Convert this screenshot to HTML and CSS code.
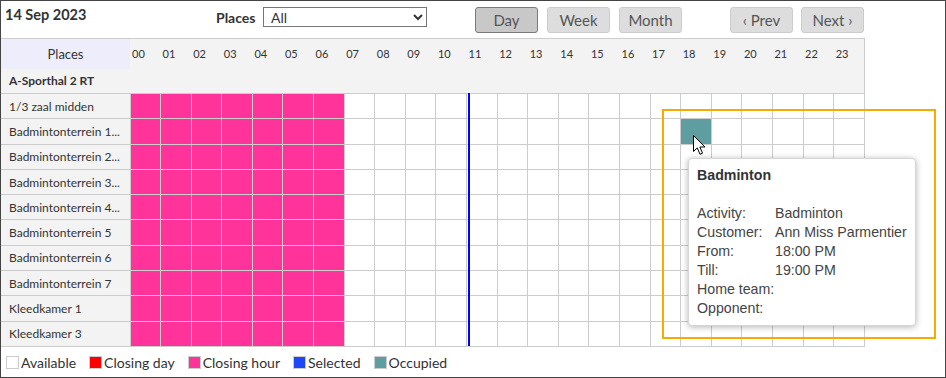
FILE: index.html
```html
<!DOCTYPE html>
<html lang="nl">
<head>
    <meta charset="UTF-8">
    <title>Planning</title>
    <link rel="stylesheet" href="styles.css">
</head>
<body>
<div class="page">
    <div class="toolbar">
        <div class="date">14 Sep 2023</div>
        <div class="places-filter">
            <span class="filter-label">Places</span>
            <select class="filter-select"><option>All</option></select>
        </div>
        <div class="btn-group views">
            <button class="btn active">Day</button>
            <button class="btn">Week</button>
            <button class="btn">Month</button>
        </div>
        <div class="btn-group pager">
            <button class="btn">&lsaquo; Prev</button>
            <button class="btn">Next &rsaquo;</button>
        </div>
    </div>

    <div class="schedule">
        <table class="grid">
            <colgroup><col class="col-place"></colgroup>
            <thead>
                <tr class="hours">
                    <th class="places-head">Places</th>
                    <th>00</th><th>01</th><th>02</th><th>03</th><th>04</th><th>05</th>
                    <th>06</th><th>07</th><th>08</th><th>09</th><th>10</th><th>11</th>
                    <th>12</th><th>13</th><th>14</th><th>15</th><th>16</th><th>17</th>
                    <th>18</th><th>19</th><th>20</th><th>21</th><th>22</th><th>23</th>
                </tr>
                <tr class="group"><th colspan="25">A-Sporthal 2 RT</th></tr>
            </thead>
            <tbody>
                <tr><th>1/3 zaal midden</th><td class="ch"></td><td class="ch"></td><td class="ch"></td><td class="ch"></td><td class="ch"></td><td class="ch"></td><td class="ch"></td><td></td><td></td><td></td><td></td><td></td><td></td><td></td><td></td><td></td><td></td><td></td><td></td><td></td><td></td><td></td><td></td><td></td></tr>
                <tr><th>Badmintonterrein 1...</th><td class="ch"></td><td class="ch"></td><td class="ch"></td><td class="ch"></td><td class="ch"></td><td class="ch"></td><td class="ch"></td><td></td><td></td><td></td><td></td><td></td><td></td><td></td><td></td><td></td><td></td><td></td><td class="oc"></td><td></td><td></td><td></td><td></td><td></td></tr>
                <tr><th>Badmintonterrein 2...</th><td class="ch"></td><td class="ch"></td><td class="ch"></td><td class="ch"></td><td class="ch"></td><td class="ch"></td><td class="ch"></td><td></td><td></td><td></td><td></td><td></td><td></td><td></td><td></td><td></td><td></td><td></td><td></td><td></td><td></td><td></td><td></td><td></td></tr>
                <tr><th>Badmintonterrein 3...</th><td class="ch"></td><td class="ch"></td><td class="ch"></td><td class="ch"></td><td class="ch"></td><td class="ch"></td><td class="ch"></td><td></td><td></td><td></td><td></td><td></td><td></td><td></td><td></td><td></td><td></td><td></td><td></td><td></td><td></td><td></td><td></td><td></td></tr>
                <tr><th>Badmintonterrein 4...</th><td class="ch"></td><td class="ch"></td><td class="ch"></td><td class="ch"></td><td class="ch"></td><td class="ch"></td><td class="ch"></td><td></td><td></td><td></td><td></td><td></td><td></td><td></td><td></td><td></td><td></td><td></td><td></td><td></td><td></td><td></td><td></td><td></td></tr>
                <tr><th>Badmintonterrein 5</th><td class="ch"></td><td class="ch"></td><td class="ch"></td><td class="ch"></td><td class="ch"></td><td class="ch"></td><td class="ch"></td><td></td><td></td><td></td><td></td><td></td><td></td><td></td><td></td><td></td><td></td><td></td><td></td><td></td><td></td><td></td><td></td><td></td></tr>
                <tr><th>Badmintonterrein 6</th><td class="ch"></td><td class="ch"></td><td class="ch"></td><td class="ch"></td><td class="ch"></td><td class="ch"></td><td class="ch"></td><td></td><td></td><td></td><td></td><td></td><td></td><td></td><td></td><td></td><td></td><td></td><td></td><td></td><td></td><td></td><td></td><td></td></tr>
                <tr><th>Badmintonterrein 7</th><td class="ch"></td><td class="ch"></td><td class="ch"></td><td class="ch"></td><td class="ch"></td><td class="ch"></td><td class="ch"></td><td></td><td></td><td></td><td></td><td></td><td></td><td></td><td></td><td></td><td></td><td></td><td></td><td></td><td></td><td></td><td></td><td></td></tr>
                <tr><th>Kleedkamer 1</th><td class="ch"></td><td class="ch"></td><td class="ch"></td><td class="ch"></td><td class="ch"></td><td class="ch"></td><td class="ch"></td><td></td><td></td><td></td><td></td><td></td><td></td><td></td><td></td><td></td><td></td><td></td><td></td><td></td><td></td><td></td><td></td><td></td></tr>
                <tr><th>Kleedkamer 3</th><td class="ch"></td><td class="ch"></td><td class="ch"></td><td class="ch"></td><td class="ch"></td><td class="ch"></td><td class="ch"></td><td></td><td></td><td></td><td></td><td></td><td></td><td></td><td></td><td></td><td></td><td></td><td></td><td></td><td></td><td></td><td></td><td></td></tr>
            </tbody>
        </table>

        <!-- current time marker -->
        <div class="now-line"></div>

        <!-- annotation frame + hover popup -->
        <div class="highlight"></div>
        <div class="tooltip">
            <div class="tooltip-title">Badminton</div>
            <div class="tooltip-rows">
                <span>Activity:</span><span>Badminton</span>
                <span>Customer:</span><span>Ann Miss Parmentier</span>
                <span>From:</span><span>18:00 PM</span>
                <span>Till:</span><span>19:00 PM</span>
                <span>Home team:</span><span></span>
                <span>Opponent:</span><span></span>
            </div>
        </div>
        <svg class="cursor" width="13" height="21" viewBox="0 0 13 21">
            <path d="M0.5 0.5 L0.5 16.5 L4.3 12.9 L7 19.3 L9.5 18.2 L6.9 12 L12 12 Z" fill="#fff" stroke="#000" stroke-width="1" stroke-linejoin="round"/>
        </svg>
    </div>

    <div class="legend">
        <span class="legend-item"><i class="swatch available"></i>Available</span>
        <span class="legend-item"><i class="swatch closing-day"></i>Closing day</span>
        <span class="legend-item"><i class="swatch closing-hour"></i>Closing hour</span>
        <span class="legend-item"><i class="swatch selected"></i>Selected</span>
        <span class="legend-item"><i class="swatch occupied"></i>Occupied</span>
    </div>
</div>
</body>
</html>
```

FILE: styles.css
```css
* {
    margin: 0;
    padding: 0;
    box-sizing: border-box;
}

body {
    font-family: Lato, "Open Sans", sans-serif;
    color: #333;
    background: #fff;
}

.page {
    width: 946px;
    height: 378px;
    border: 1px solid #444;
    overflow: hidden;
}

/* top bar */
.toolbar {
    height: 37px;
    display: flex;
    align-items: flex-start;
    padding: 5px 0 0 4px;
}

.date {
    width: 211px;
    font-size: 14.5px;
    font-weight: bold;
    line-height: 18px;
}

.places-filter {
    display: flex;
    align-items: center;
    margin-top: 1px;
}

.filter-label {
    width: 47px;
    font-size: 14px;
    font-weight: bold;
}

.filter-select {
    width: 164px;
    height: 20px;
    font-family: Lato, sans-serif;
    font-size: 14px;
    color: #333;
    border: 1px solid #767676;
    border-radius: 0;
    background: #fff;
    padding-left: 3px;
}

.btn-group {
    display: flex;
    margin-top: 1px;
    margin-left: 48px;
}

.views {
    gap: 9px;
}

.pager {
    gap: 8px;
}

.btn {
    width: 63px;
    height: 26px;
    background: #ddd;
    border: 1px solid #ccc;
    border-radius: 3px;
    color: #555;
    font-family: Lato, sans-serif;
    font-size: 15px;
}

.btn.active {
    background: #c8c8c8;
    border-color: #7a7a7a;
}

/* schedule grid */
.schedule {
    position: relative;
}

.grid {
    width: 864px;
    table-layout: fixed;
    border-collapse: collapse;
    border-top: 1px solid #ccc;
    border-right: 1px solid #ccc;
}

.col-place {
    width: 129px;
}

.grid th {
    font-weight: normal;
    text-align: left;
}

.hours {
    height: 30px;
    background: #f3f3f3;
}

.hours th {
    font-size: 11px;
    padding-left: 2px;
}

.hours .places-head {
    background: #ededfb;
    font-size: 13px;
    text-align: center;
    padding: 0;
}

.group {
    height: 25px;
    background: #f3f3f3;
}

.group th {
    font-weight: bold;
    font-size: 12px;
    padding-left: 8px;
    border-bottom: 1px solid #ccc;
}

tbody tr {
    height: 25.3px;
}

tbody th {
    background: #f3f3f3;
    font-size: 12px;
    padding-left: 8px;
    white-space: nowrap;
    border: 1px solid #ccc;
    border-left: none;
}

tbody td {
    border: 1px solid #ccc;
}

td.ch {
    background: #ff3399;
}

td.oc {
    background: #5f9ea0;
}

.now-line {
    position: absolute;
    left: 467px;
    top: 55px;
    width: 1.5px;
    height: 253px;
    background: #0000ff;
}

.highlight {
    position: absolute;
    left: 661px;
    top: 71px;
    width: 274px;
    height: 230px;
    border: 2px solid #f7ab00;
}

.tooltip {
    position: absolute;
    left: 687px;
    top: 120px;
    background: #fff;
    border: 1px solid #d6d6d6;
    border-radius: 4px;
    box-shadow: 0 1px 6px rgba(0,0,0,0.3);
    padding: 7px 8px 7px 8px;
    font-family: "Liberation Sans", Arial, sans-serif;
    font-size: 14.2px;
    line-height: 19px;
    color: #444;
}

.tooltip-title {
    font-weight: bold;
    color: #333;
    margin-bottom: 19px;
}

.tooltip-rows {
    display: grid;
    grid-template-columns: 78px auto;
}

.cursor {
    position: absolute;
    left: 692px;
    top: 97px;
}

/* legend */
.legend {
    display: flex;
    gap: 13px;
    padding: 7px 0 0 5px;
    font-size: 14px;
    line-height: 18px;
}

.legend-item {
    display: flex;
    align-items: center;
    gap: 2px;
}

.swatch {
    width: 13px;
    height: 13px;
    border: 1px solid #ccc;
}

.available { background: #fff; }
.closing-day { background: #ff0000; }
.closing-hour { background: #ff3399; }
.selected { background: #1f47f5; }
.occupied { background: #5f9ea0; }
```
